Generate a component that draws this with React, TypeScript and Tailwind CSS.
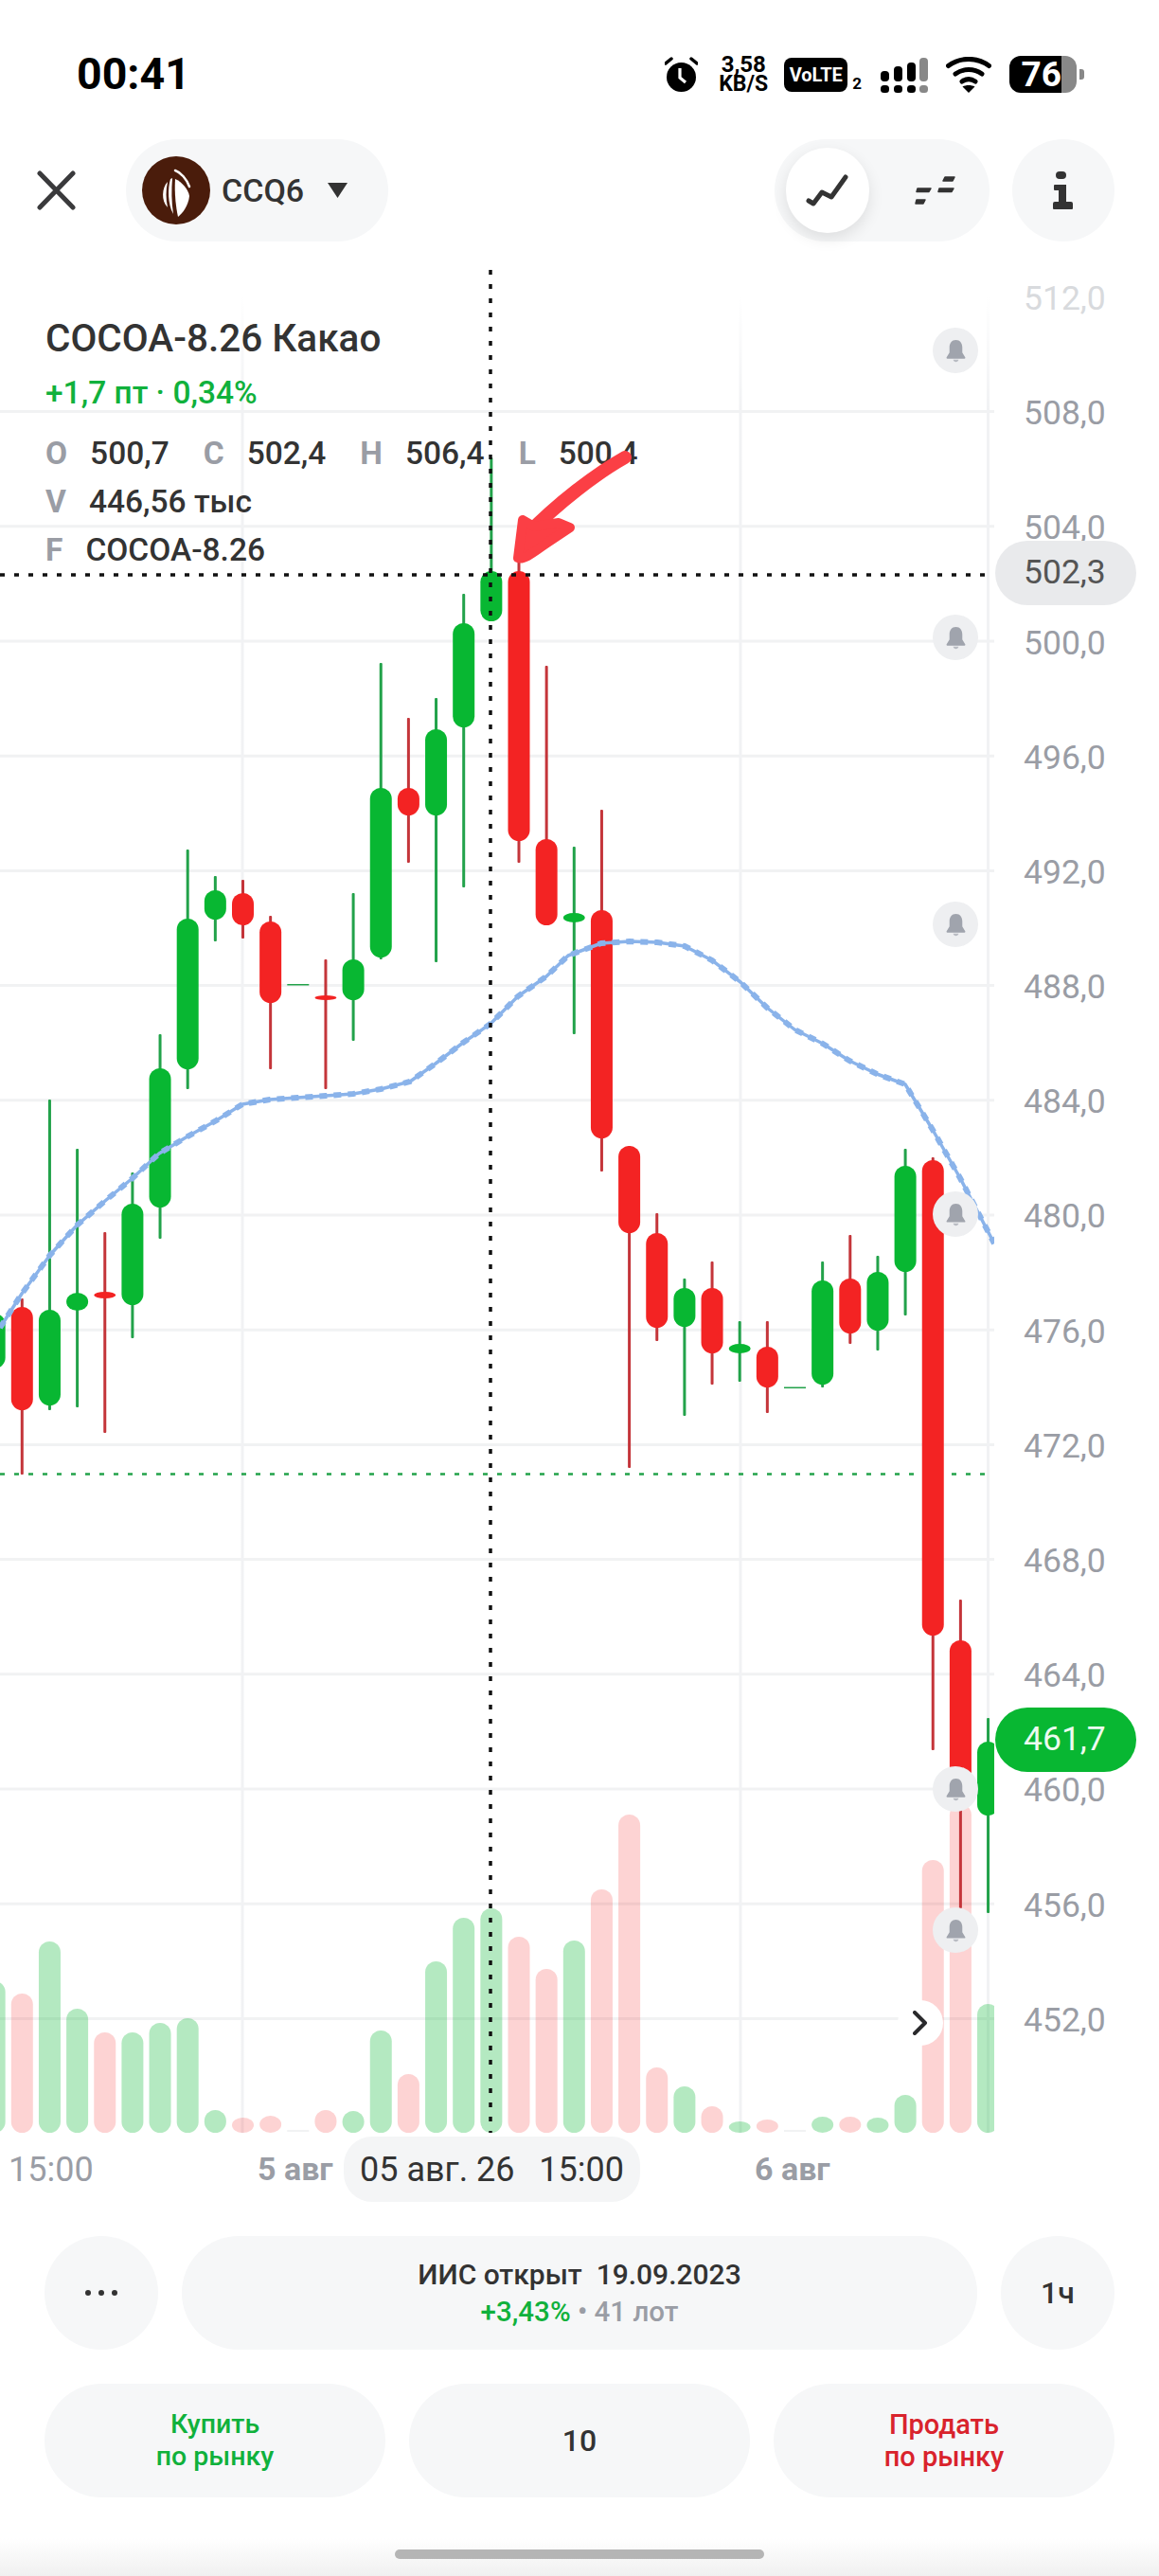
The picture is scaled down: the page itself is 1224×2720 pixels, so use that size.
import React from "react";

const GREEN = "#08b732";
const RED = "#f32323";
const GREEN_WICK = "#22a24a";
const RED_WICK = "#c4353a";

const slot = (i: number) => 23.3 + 29.15 * i;

type Candle = [number, "g" | "r", number, number, number, number];

const candles: Candle[] = [
  [-1, "g", 1380, 1450, 1387, 1445],
  [0, "r", 1371, 1557, 1380, 1489],
  [1, "g", 1161, 1489, 1383, 1484],
  [2, "g", 1213, 1486, 1365, 1384],
  [3, "r", 1301, 1513, 1364, 1371],
  [4, "g", 1238, 1413, 1271, 1378],
  [5, "g", 1092, 1308, 1128, 1275],
  [6, "g", 897, 1150, 970, 1129],
  [7, "g", 925, 994, 940, 971],
  [8, "r", 929, 991, 943, 977],
  [9, "r", 967, 1129, 973, 1059],
  [11, "r", 1013, 1150, 1051, 1056],
  [12, "g", 943, 1099, 1013, 1056],
  [13, "g", 700, 1013, 832, 1011],
  [14, "r", 758, 911, 832, 861],
  [15, "g", 737, 1016, 770, 861],
  [16, "g", 627, 937, 658, 768],
  [17, "g", 483, 656, 603, 656],
  [18, "r", 593, 911, 603, 888],
  [19, "r", 703, 976, 886, 977],
  [20, "g", 894, 1092, 964, 974],
  [21, "r", 855, 1237, 961, 1202],
  [22, "r", 1210, 1550, 1210, 1302],
  [23, "r", 1281, 1416, 1302, 1402],
  [24, "g", 1350, 1495, 1360, 1401],
  [25, "r", 1332, 1462, 1360, 1429],
  [26, "g", 1395, 1459, 1419, 1429],
  [27, "r", 1395, 1492, 1422, 1465],
  [29, "g", 1332, 1465, 1352, 1462],
  [30, "r", 1304, 1419, 1350, 1408],
  [31, "g", 1326, 1426, 1343, 1405],
  [32, "g", 1213, 1389, 1231, 1343],
  [33, "r", 1222, 1848, 1225, 1727],
  [34, "r", 1689, 2015, 1732, 1885],
  [35, "g", 1814, 2020, 1839, 1917],
];

const volumes: [number, "g" | "r", number][] = [
  [-1, "g", 2092], [0, "r", 2105], [1, "g", 2050], [2, "g", 2121], [3, "r", 2146], [4, "g", 2146],
  [5, "g", 2136], [6, "g", 2131], [7, "g", 2228], [8, "r", 2236], [9, "r", 2234], [11, "r", 2228],
  [12, "g", 2229], [13, "g", 2144], [14, "r", 2190], [15, "g", 2071], [16, "g", 2025], [17, "g", 2015],
  [18, "r", 2045], [19, "r", 2079], [20, "g", 2049], [21, "r", 1995], [22, "r", 1916], [23, "r", 2183],
  [24, "g", 2203], [25, "r", 2224], [26, "g", 2240], [27, "r", 2238], [29, "g", 2235], [30, "r", 2235],
  [31, "g", 2236], [32, "g", 2212], [33, "r", 1964], [34, "r", 1905], [35, "g", 2116],
];

const maLine =
  "M0 1402 L23 1366 L53 1325 L81 1294 L111 1268 L140 1244 L168 1218 L198 1200 L227 1184 L256 1166 L285 1161 L314 1159 L344 1157 L373 1155 L402 1150 L433 1142 L460 1123 L489 1101 L518 1081 L547 1052 L577 1031 L600 1009 L635 996 L665 994 L694 995 L723 999 L752 1014 L782 1037 L810 1064 L839 1087 L869 1102 L897 1120 L926 1134 L956 1145 L985 1193 L1014 1244 L1050 1313";

const axisLabels = ["512,0", "508,0", "504,0", "500,0", "496,0", "492,0", "488,0", "484,0", "480,0", "476,0", "472,0", "468,0", "464,0", "460,0", "456,0", "452,0"];

const gridYs = axisLabels.map((_, i) => 313.4 + 121.2 * i);

function Chart() {
  return (
    <svg viewBox="0 252 1050 2000" className="block w-[1050px] h-[2000px] shrink-0">
      <defs>
        <linearGradient id="vfade" x1="0" y1="252" x2="0" y2="2252" gradientUnits="userSpaceOnUse">
          <stop offset="0.03" stopColor="#f1f2f4" stopOpacity="0" />
          <stop offset="0.09" stopColor="#f1f2f4" />
        </linearGradient>
      </defs>
      {gridYs.slice(1).map((y) => (
        <line key={y} x1="0" x2="1050" y1={y} y2={y} stroke="#f1f2f3" strokeWidth="3" />
      ))}
      {[256, 782, 1043.5].map((x) => (
        <rect key={x} x={x - 1.5} y="252" width="3" height="2000" fill="url(#vfade)" />
      ))}
      {volumes.map(([i, c, top]) => (
        <rect
          key={i}
          x={slot(i) - 11.5}
          y={top}
          width="23"
          height={2252 - top}
          rx="11.5"
          fill={c === "g" ? GREEN : RED}
          fillOpacity={c === "g" ? 0.3 : 0.2}
        />
      ))}
      <rect x={slot(10) - 11.5} y="2249" width="23" height="2" fill="#f1f2f3" />
      <rect x={slot(28) - 11.5} y="2249" width="23" height="2" fill="#f1f2f3" />
      <line x1="0" x2="1042" y1="1556.5" y2="1556.5" stroke={GREEN_WICK} strokeWidth="2.5" strokeDasharray="5 10" />
      <rect x={slot(10) - 11.5} y="1039" width="23" height="1.5" fill={GREEN_WICK} />
      <rect x={slot(28) - 11.5} y="1464.5" width="23" height="1.5" fill={GREEN_WICK} />
      {candles.map(([i, c, wt, wb, bt, bb]) => (
        <g key={i}>
          <rect x={slot(i) - 1.5} y={wt} width="3" height={wb - wt} fill={c === "g" ? GREEN_WICK : RED_WICK} rx="1" />
          <rect x={slot(i) - 11.5} y={bt} width="23" height={bb - bt} rx="11.5" fill={c === "g" ? GREEN : RED} />
        </g>
      ))}
      <path d={maLine} fill="none" stroke="#8ab3ea" strokeWidth="3.5" strokeLinejoin="round" />
      <path d={maLine} fill="none" stroke="#8ab3ea" strokeWidth="6" strokeDasharray="8 7" />
      <line x1="518" x2="518" y1="285" y2="2252" stroke="#111" strokeWidth="3.5" strokeDasharray="5 10" />
      <line x1="0" x2="1050" y1="607" y2="607" stroke="#111" strokeWidth="3.5" strokeDasharray="5 10" />
    </svg>
  );
}

function Bell() {
  return (
    <span className="flex items-center justify-center w-[48px] h-[48px] rounded-full bg-[#eeeff1]">
      <svg viewBox="0 0 24 24" className="w-[25px] h-[25px]" fill="#a0a4ad">
        <path d="M12 1C7.8 1 5.5 4.3 5.5 8.4v5.2L2.6 18.4c-.4.7 0 1.4.8 1.4h17.2c.8 0 1.2-.7.8-1.4l-2.9-4.8V8.4C18.5 4.3 16.2 1 12 1z" />
        <path d="M9.2 20.8c.3 1.5 1.4 2.4 2.8 2.4s2.5-.9 2.8-2.4z" fill="#b9bcc3" />
      </svg>
    </span>
  );
}

function StatusBar() {
  return (
    <div className="flex items-center justify-between h-[147px] pt-[10px] pl-[81px] pr-[79px] text-black">
      <span className="text-[46.5px] font-bold leading-none">00:41</span>
      <div className="flex items-center">
        <svg viewBox="0 0 35 38" className="w-[35px] h-[38px]">
          <circle cx="17.5" cy="21.5" r="15.5" fill="#000" />
          <path d="M1 7l6-5M34 7l-6-5" stroke="#000" strokeWidth="3.5" strokeLinecap="round" />
          <path d="M16 12v10l6 5" fill="none" stroke="#fff" strokeWidth="3.2" />
        </svg>
        <div className="flex flex-col items-center ml-[22px] w-[52px] font-bold">
          <span className="text-[24px] leading-[21px]">3,58</span>
          <span className="text-[23px] leading-[20px]">KB/S</span>
        </div>
        <span className="flex items-center justify-center ml-[17px] w-[67px] h-[36px] rounded-[8px] bg-black text-white text-[20px] font-bold">VoLTE</span>
        <span className="self-end ml-[5px] text-[17px] leading-[22px] font-bold">2</span>
        <svg viewBox="0 0 50 38" className="ml-[20px] w-[50px] h-[38px]">
          <rect x="0" y="15" width="9" height="11" rx="4" />
          <rect x="14" y="10" width="9" height="16" rx="4" />
          <rect x="28" y="6" width="9" height="20" rx="4" />
          <rect x="41" y="1" width="9" height="25" rx="4" fill="#888" />
          <rect x="0" y="30" width="9" height="8" rx="3.5" />
          <rect x="14" y="30" width="9" height="8" rx="3.5" />
          <rect x="28" y="30" width="9" height="8" rx="3.5" />
          <rect x="41" y="30" width="9" height="8" rx="3.5" fill="#888" />
        </svg>
        <svg viewBox="0 0 48 38" className="ml-[19px] w-[48px] h-[38px]" fill="none" stroke="#000" strokeWidth="5" strokeLinecap="round">
          <path d="M2.5 9.5C15 0 33 0 45.5 9.5" />
          <path d="M10 18c8.500-6 19.500-6 28 0" />
          <path d="M17 26c4.500-3 9.500-3 14 0" />
          <path d="M24 38l-6.500-6.500c3.500-2 9.500-2 13 0z" fill="#000" stroke="none" />
        </svg>
        <div className="flex items-center ml-[19px]">
          <div className="flex w-[71px] h-[39px]">
            <span className="flex items-center justify-end w-[55px] rounded-l-[12px] bg-black text-white text-[37px] font-bold leading-[39px]">76</span>
            <span className="w-[16px] rounded-r-[12px] bg-[#888]" />
          </div>
          <span className="ml-[3px] w-[5px] h-[11px] rounded-r-[3px] bg-[#888]" />
        </div>
      </div>
    </div>
  );
}

function Toolbar() {
  return (
    <div className="flex items-center justify-between h-[108px] pl-[39px] pr-[47px]">
      <div className="flex items-center">
        <svg viewBox="0 0 41 42" className="w-[41px] h-[42px]" stroke="#3a3a3c" strokeWidth="5" strokeLinecap="round">
          <path d="M3 3l35 36M38 3L3 39" />
        </svg>
        <div className="flex items-center ml-[53px] w-[277px] h-[108px] pl-[17px] rounded-full bg-[#f6f7f8]">
          <svg viewBox="0 0 72 72" className="w-[72px] h-[72px]">
            <circle cx="36" cy="36" r="36" fill="#4a1c0b" />
            <path d="M27 27C21 33 20 47 27 54C25 45 25 36 27 27z" fill="#fff" />
            <path d="M30 24C27 34 27 50 33 61C31 48 31 35 32 23z" fill="#fff" />
            <path d="M35 24C42 27 49 35 50 42C49 52 43 60 38 64C36 55 34 40 35 24z" fill="#fff" />
            <path d="M35 15C41 17 47 24 50 32" stroke="#fff" strokeWidth="2.5" fill="none" strokeLinecap="round" />
          </svg>
          <span className="ml-[12px] text-[34px] font-medium text-[#333]">CCQ6</span>
          <svg viewBox="0 0 21 16" className="ml-[25px] w-[21px] h-[16px]" fill="#333">
            <path d="M0 0h21L10.500 16z" />
          </svg>
        </div>
      </div>
      <div className="flex items-center gap-[24px]">
        <div className="flex items-center w-[227px] h-[108px] pl-[12px] rounded-full bg-[#f6f7f8]">
          <span className="flex items-center justify-center w-[88px] h-[90px] rounded-full bg-white shadow-[0_6px_16px_rgba(0,0,0,0.1)]">
            <svg viewBox="0 0 46 34" className="w-[46px] h-[34px]" fill="none" stroke="#333" strokeWidth="5" strokeLinejoin="round" strokeLinecap="round">
              <path d="M3 28L8 31L17 19L27 24L42 3" />
            </svg>
          </span>
          <svg viewBox="0 0 44 30" className="ml-[48px] w-[44px] h-[30px]" fill="#333" stroke="#333" strokeWidth="1.5" strokeLinejoin="round">
            <path d="M32 1h10l-2 4H30zM3 13h14l-2 3.500H2zM26 13h15l-2 3.500H25zM2 25h9l-2 4H1z" />
          </svg>
        </div>
        <div className="flex items-center justify-center w-[108px] h-[108px] rounded-full bg-[#f6f7f8]">
          <svg viewBox="0 0 22 40" className="w-[22px] h-[40px]" fill="#333">
            <rect x="3" y="0" width="11" height="8" rx="4" />
            <path d="M2 14h12v18h5q2 0 2 2v5q0 1-1 1H1q-1 0-1-1v-5q0-2 2-2h4V20H2q-1 0-1-1v-4q0-1 1-1z" />
          </svg>
        </div>
      </div>
    </div>
  );
}

function Readout() {
  return (
    <div className="absolute left-[48px] top-[81px] flex flex-col text-[#333]">
      <span className="text-[40.500px] leading-[48px] font-medium">COCOA-8.26 Какао</span>
      <span className="mt-[14px] text-[33.500px] leading-[40px] font-medium text-[#10b13c]">+1,7 пт · 0,34%</span>
      <div className="mt-[24px] flex flex-col gap-[11px] text-[33.500px] leading-[40px] font-medium">
        <div className="flex gap-[36px]">
          <span className="flex gap-[24px]"><b className="font-bold text-[#9a9da5]">O</b>500,7</span>
          <span className="flex gap-[24px]"><b className="font-bold text-[#9a9da5]">C</b>502,4</span>
          <span className="flex gap-[24px]"><b className="font-bold text-[#9a9da5]">H</b>506,4</span>
          <span className="flex gap-[24px]"><b className="font-bold text-[#9a9da5]">L</b>500,4</span>
        </div>
        <span className="flex gap-[24px]"><b className="font-bold text-[#9a9da5]">V</b>446,56 тыс</span>
        <span className="flex gap-[24px]"><b className="font-bold text-[#9a9da5]">F</b>COCOA-8.26</span>
      </div>
    </div>
  );
}

function Arrow() {
  return (
    <svg viewBox="535 470 135 130" className="absolute left-[535px] top-[218px] w-[135px] h-[130px]">
      <path d="M660 483C630 500 590 530 555 566" fill="none" stroke="#fb3f45" strokeWidth="14" strokeLinecap="round" />
      <path d="M547 589L552 549L564 556L590 552L602 557L578 573C565 582 553 592 547 589z" fill="#fb3f45" stroke="#fb3f45" strokeWidth="10" strokeLinejoin="round" />
    </svg>
  );
}

function Axis() {
  return (
    <div className="flex flex-col pt-[3px] pl-[31px] text-[35.500px] text-[#9a9da5]">
      {axisLabels.map((label, i) => (
        <span key={label} className={`flex items-center shrink-0 h-[121.2px] ${i === 0 ? "text-[#d8dadd]" : ""}`}>
          {label}
        </span>
      ))}
    </div>
  );
}

function DateAxis() {
  return (
    <div className="flex items-center pt-[4px] pl-[9px] text-[36px] text-[#9a9da5]">
      <span className="w-[88px]">15:00</span>
      <span className="ml-[175px] w-[83px] text-[34px] font-bold">5 авг</span>
      <div className="flex items-center justify-between ml-[8px] w-[313px] h-[69px] px-[17px] rounded-[30px] bg-[#f4f5f6] text-[#333]">
        <span>05 авг. 26</span>
        <span>15:00</span>
      </div>
      <span className="ml-[121px] text-[34px] font-bold">6 авг</span>
    </div>
  );
}

function Controls() {
  return (
    <div className="flex flex-col gap-[36px] mt-[36px] px-[47px] text-[#333]">
      <div className="flex gap-[25px] h-[120px]">
        <span className="flex items-center justify-center gap-[8px] w-[120px] rounded-full bg-[#f6f7f8]">
          <i className="w-[6px] h-[6px] rounded-full bg-[#333]" />
          <i className="w-[6px] h-[6px] rounded-full bg-[#333]" />
          <i className="w-[6px] h-[6px] rounded-full bg-[#333]" />
        </span>
        <div className="flex flex-1 flex-col items-center justify-center rounded-full bg-[#f6f7f8]">
          <span className="text-[30px] leading-[40px] font-medium whitespace-pre">ИИС открыт  19.09.2023</span>
          <span className="text-[29.500px] leading-[38px] font-medium text-[#9a9da5]">
            <span className="text-[#10b13c]">+3,43%</span> • 41 лот
          </span>
        </div>
        <span className="flex items-center justify-center w-[120px] rounded-full bg-[#f6f7f8] text-[32px] font-medium">1ч</span>
      </div>
      <div className="grid grid-cols-3 gap-[25px] h-[120px]">
        <span className="flex items-center justify-center rounded-full bg-[#f6f7f8] text-center text-[28.500px] leading-[34px] font-medium text-[#10b13c]">
          Купить
          <br />
          по рынку
        </span>
        <span className="flex items-center justify-center rounded-full bg-[#f6f7f8] text-[32px] font-medium">10</span>
        <span className="flex items-center justify-center rounded-full bg-[#f6f7f8] text-center text-[29px] leading-[34px] font-medium text-[#d9232c]">
          Продать
          <br />
          по рынку
        </span>
      </div>
    </div>
  );
}

export default function App() {
  return (
    <div className="relative w-[1224px] h-[2720px] overflow-hidden bg-white font-['Roboto',sans-serif]">
      <StatusBar />
      <Toolbar />
      <div className="relative flex -mt-[3px] h-[2000px]">
        <Chart />
        <Axis />
        <Readout />
        <Arrow />
        <div className="absolute left-[985px] top-[94px]"><Bell /></div>
        <div className="absolute left-[985px] top-[397px]"><Bell /></div>
        <div className="absolute left-[985px] top-[700px]"><Bell /></div>
        <div className="absolute left-[985px] top-[1006px]"><Bell /></div>
        <div className="absolute left-[985px] top-[1613px]"><Bell /></div>
        <div className="absolute left-[985px] top-[1762px]"><Bell /></div>
        <span className="absolute left-[1051px] top-[319px] flex items-center w-[149px] h-[68px] pl-[30px] rounded-full bg-[#e9eaec] text-[35.500px] text-[#555]">502,3</span>
        <span className="absolute left-[1051px] top-[1551px] flex items-center w-[149px] h-[68px] pl-[30px] rounded-full bg-[#08b732] text-[35.500px] text-[#ecfbf0]">461,7</span>
        <span className="absolute left-[948px] top-[1860px] flex items-center justify-center w-[48px] h-[48px] rounded-full bg-white">
          <svg viewBox="0 0 16 26" className="w-[16px] h-[26px]" fill="none" stroke="#2a2a2c" strokeWidth="4" strokeLinecap="round" strokeLinejoin="round">
            <path d="M2 2l11 11L2 24" />
          </svg>
        </span>
      </div>
      <DateAxis />
      <Controls />
      <div className="mt-[43px] h-[40px] pt-[12px] bg-gradient-to-b from-white to-[#f0f0f0]">
        <div className="mx-auto w-[390px] h-[10px] rounded-full bg-[#b5b5b5]" />
      </div>
    </div>
  );
}
